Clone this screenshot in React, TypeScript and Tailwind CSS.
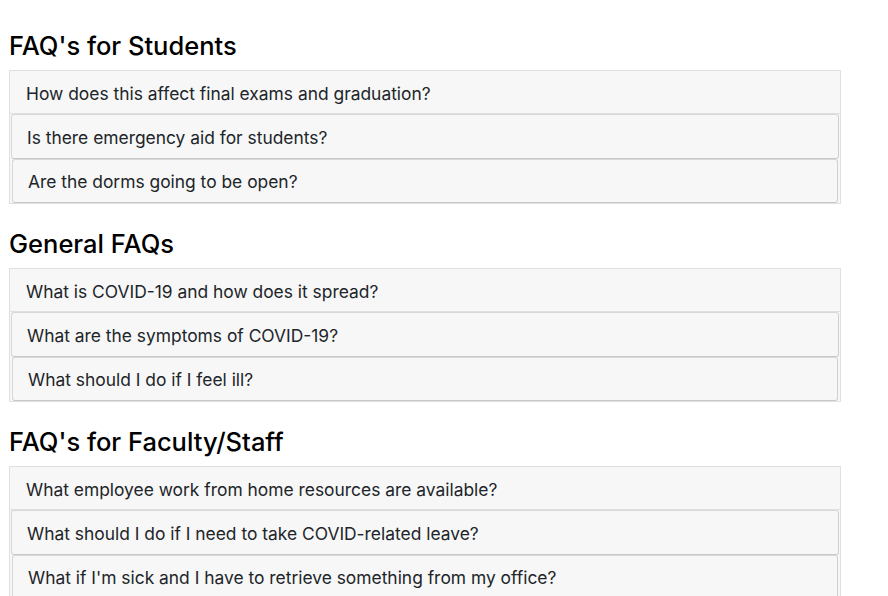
const sections = [
    {
        title: "FAQ's for Students",
        items: [
            'How does this affect final exams and graduation?',
            'Is there emergency aid for students?',
            'Are the dorms going to be open?',
        ],
    },
    {
        title: 'General FAQs',
        items: [
            'What is COVID-19 and how does it spread?',
            'What are the symptoms of COVID-19?',
            'What should I do if I feel ill?',
        ],
    },
    {
        title: "FAQ's for Faculty/Staff",
        items: [
            'What employee work from home resources are available?',
            'What should I do if I need to take COVID-related leave?',
            "What if I'm sick and I have to retrieve something from my office?",
        ],
    },
];

function FaqCard({ items }: { items: string[] }) {
    const [first, second, third] = items;
    return (
        <div className="w-[832px] border border-[#e0e0e0] bg-[#f7f7f7]">
            {/* first question sits flat in the card */}
            <div className="h-[43px] flex items-center pl-4 pt-[3px] border-b border-[#e0e0e0]">
                {first}
            </div>
            {/* the others are little cards of their own */}
            <div className="ml-px mr-px h-[45px] flex items-center pl-[15px] pt-[3px] border border-[#d8d8d8] border-r-[#cfcfcf] border-b-[#c8c8c8] rounded-[3px]">
                {second}
            </div>
            <div className="ml-[2px] mr-[2px] h-[44px] flex items-center pl-[15px] pt-[2px] border border-[#d8d8d8] border-r-[#cfcfcf] border-b-[#c8c8c8] rounded-[3px]">
                {third}
            </div>
        </div>
    );
}

export default function App() {
    return (
        <div className="min-h-[596px] bg-white pl-[9px] pt-[31px] text-[#212529] text-[17.4px] leading-6 font-['Inter',sans-serif]">
            {sections.map((section, i) => (
                <div key={section.title} className={i > 0 ? 'mt-[25px]' : ''}>
                    <h3 className="text-[25.5px] leading-[30px] font-medium text-black mb-[9px]">
                        {section.title}
                    </h3>
                    <FaqCard items={section.items} />
                </div>
            ))}
        </div>
    );
}
